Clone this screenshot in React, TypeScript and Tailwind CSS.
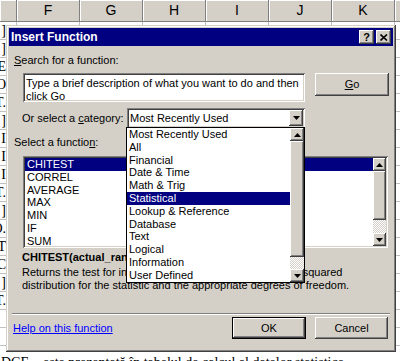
import React from "react";

const WINDOW =
  "shadow-[inset_-1px_-1px_#404040,inset_1px_1px_#d4d0c8,inset_-2px_-2px_#808080,inset_2px_2px_#ffffff]";
const RAISED =
  "shadow-[inset_-1px_-1px_#404040,inset_1px_1px_#ffffff,inset_-2px_-2px_#808080,inset_2px_2px_#d4d0c8]";
const SUNKEN =
  "shadow-[inset_1px_1px_#808080,inset_-1px_-1px_#ffffff,inset_2px_2px_#404040,inset_-2px_-2px_#d4d0c8]";
const DEFAULT_BTN =
  "shadow-[inset_0_0_0_1px_#000000,inset_-2px_-2px_#404040,inset_2px_2px_#ffffff,inset_-3px_-3px_#808080]";
const CHECKER =
  "bg-[image:repeating-conic-gradient(#ffffff_0%_25%,#d4d0c8_0%_50%)] bg-[length:2px_2px]";

function Tri({ up }: { up?: boolean }) {
  return (
    <svg width="7" height="4" viewBox="0 0 7 4">
      {up ? <polygon points="0,4 7,4 3.5,0" fill="#000" /> : <polygon points="0,0 7,0 3.5,4" fill="#000" />}
    </svg>
  );
}

function ArrowBtn({ up }: { up?: boolean }) {
  return (
    <div className={`${RAISED} bg-[#d4d0c8] w-full h-[13px] flex items-center justify-center shrink-0`}>
      <Tri up={up} />
    </div>
  );
}

const leftChars = [']', ']', 'E', 'O', 'T.', ']', 'I', 'I', 'I', 'T.', ']', 'O.', 'T', 'C', ']', 'T.', '', '', ''];
const cols = ["F", "G", "H", "I", "J", "K"];

const categories = [
  "Most Recently Used",
  "All",
  "Financial",
  "Date & Time",
  "Math & Trig",
  "Statistical",
  "Lookup & Reference",
  "Database",
  "Text",
  "Logical",
  "Information",
  "User Defined",
];
const funcs = ["CHITEST", "CORREL", "AVERAGE", "MAX", "MIN", "IF", "SUM"];

export default function App() {
  return (
    <div className="relative w-[400px] h-[361px] overflow-hidden bg-white font-['Liberation_Sans',Arial,sans-serif]">
      {/* Column header */}
      <div className="flex h-[22px] bg-[#d4d0c8] border-b border-[#808080]">
        <div className="w-[17px] shrink-0 border-r border-[#808080] shadow-[inset_1px_1px_#ffffff]" />
        {cols.map((c) => (
          <div
            key={c}
            className="w-[63px] shrink-0 border-r border-[#808080] shadow-[inset_1px_1px_#ffffff] flex items-center justify-center text-[14px] text-black"
          >
            {c}
          </div>
        ))}
        <div className="flex-1 shadow-[inset_1px_1px_#ffffff]" />
      </div>
      {/* Grid rows */}
      <div className="flex flex-col">
        {leftChars.map((ch, i) => (
          <div key={i} className="flex h-[18px] shrink-0">
            <div className="w-[17px] shrink-0 border-r border-b border-[#c0c0c0] overflow-hidden flex justify-end items-center pr-[10px] font-['Liberation_Serif',serif] text-[14px] leading-none text-black">
              {ch}
            </div>
            {cols.map((c) => (
              <div key={c} className="w-[63px] shrink-0 border-r border-b border-[#c0c0c0]" />
            ))}
            <div className="flex-1 border-b border-[#c0c0c0]" />
          </div>
        ))}
      </div>
      <div className="absolute left-0 top-[348px] w-[400px] h-[20px] bg-white pt-[7px] pl-[1px] font-['Liberation_Serif',serif] text-[14px] leading-[16px] text-black whitespace-nowrap">
        DCE – este prezentată în tabelul de calcul al datelor statistice
      </div>

      {/* Dialog */}
      <div className={`absolute left-[6px] top-[25px] w-[390px] h-[327px] bg-[#d4d0c8] p-[3px] ${WINDOW} flex flex-col`}>
        <div className="h-[18px] bg-[#000080] flex items-center pl-[2px] pr-[2px] shrink-0">
          <span className="text-white font-bold text-[12px] leading-none">Insert Function</span>
          <div className="ml-auto flex gap-[2px]">
            <div className={`${RAISED} bg-[#d4d0c8] w-[15px] h-[14px] flex items-center justify-center text-[11px] font-bold leading-none text-black`}>
              ?
            </div>
            <div className={`${RAISED} bg-[#d4d0c8] w-[15px] h-[14px] flex items-center justify-center`}>
              <svg width="8" height="7" viewBox="0 0 8 7">
                <path d="M0.5 0.5 L7 6.5 M7 0.5 L0.5 6.5" stroke="#000" strokeWidth="1.6" />
              </svg>
            </div>
          </div>
        </div>

        <div className="flex flex-col text-[11px] leading-[13px] text-black">
          <div className="mt-[8px] ml-[5px] h-[13px]">
            <u>S</u>earch for a function:
          </div>
          <div className="mt-[6px] ml-[14px] flex items-start">
            <div className={`${SUNKEN} bg-white w-[282px] h-[29px] pl-[3px] pt-[4px]`}>
              Type a brief description of what you want to do and then
              <br />
              click Go
            </div>
            <div className={`${RAISED} ml-[10px] w-[74px] h-[23px] flex items-center justify-center`}>
              <span>
                <u>G</u>o
              </span>
            </div>
          </div>
          <div className="mt-[6px] flex items-center h-[20px]">
            <div className="ml-[13px] w-[105px] shrink-0">
              Or select a <u>c</u>ategory:
            </div>
            <div className={`${SUNKEN} bg-white w-[178px] h-[20px] flex items-center pl-[3px] pr-[2px]`}>
              <span>Most Recently Used</span>
              <div className="ml-auto w-[14px] h-[16px]">
                <div className={`${RAISED} bg-[#d4d0c8] w-full h-full flex items-center justify-center`}>
                  <Tri />
                </div>
              </div>
            </div>
          </div>
          <div className="mt-[8px] ml-[5px] h-[13px]">
            Select a functio<u>n</u>:
          </div>
          <div className={`${SUNKEN} bg-white mt-[7px] ml-[14px] w-[365px] h-[92px] p-[2px] flex`}>
            <div className="flex-1 flex flex-col">
              {funcs.map((f, i) => (
                <div
                  key={f}
                  className={`h-[12.8px] leading-[12.8px] pl-[2px] ${i === 0 ? "bg-[#000080] text-white" : ""}`}
                >
                  {f}
                </div>
              ))}
            </div>
            <div className="w-[13px] flex flex-col">
              <ArrowBtn up />
              <div className={`${RAISED} bg-[#d4d0c8] h-[49px] shrink-0`} />
              <div className={`${CHECKER} flex-1`} />
              <ArrowBtn />
            </div>
          </div>
          <div className="mt-[3px] ml-[13px] font-bold whitespace-nowrap">
            CHITEST(actual_range,expected_range)
          </div>
          <div className="mt-[2px] ml-[13px] whitespace-nowrap">
            Returns the test for independence: the value from the chi-squared
            <br />
            distribution for the statistic and the appropriate degrees of freedom.
          </div>
          <div className="mt-[21px] mx-[3px] h-[2px] border-t border-[#808080] border-b border-b-white" />
          <div className="mt-[2px] flex items-center h-[22px]">
            <span className="ml-[4px] text-[#0000ff] underline">Help on this function</span>
            <div className={`${DEFAULT_BTN} ml-auto w-[74px] h-[22px] flex items-center justify-center`}>OK</div>
            <div className={`${RAISED} ml-[9px] mr-[5px] w-[73px] h-[22px] flex items-center justify-center`}>Cancel</div>
          </div>
        </div>
      </div>

      {/* Open category dropdown */}
      <div className="absolute left-[126px] top-[127px] w-[179px] h-[156px] bg-white border border-black flex text-[11px] text-black">
        <div className="flex-1 flex flex-col">
          {categories.map((c) => (
            <div
              key={c}
              className={`h-[12.8px] leading-[12.8px] pl-[2px] whitespace-nowrap ${c === "Statistical" ? "bg-[#000080] text-white" : ""}`}
            >
              {c}
            </div>
          ))}
        </div>
        <div className="w-[14px] flex flex-col">
          <ArrowBtn up />
          <div className={`${RAISED} bg-[#d4d0c8] h-[116px] shrink-0`} />
          <div className={`${CHECKER} flex-1`} />
          <ArrowBtn />
        </div>
      </div>
    </div>
  );
}
